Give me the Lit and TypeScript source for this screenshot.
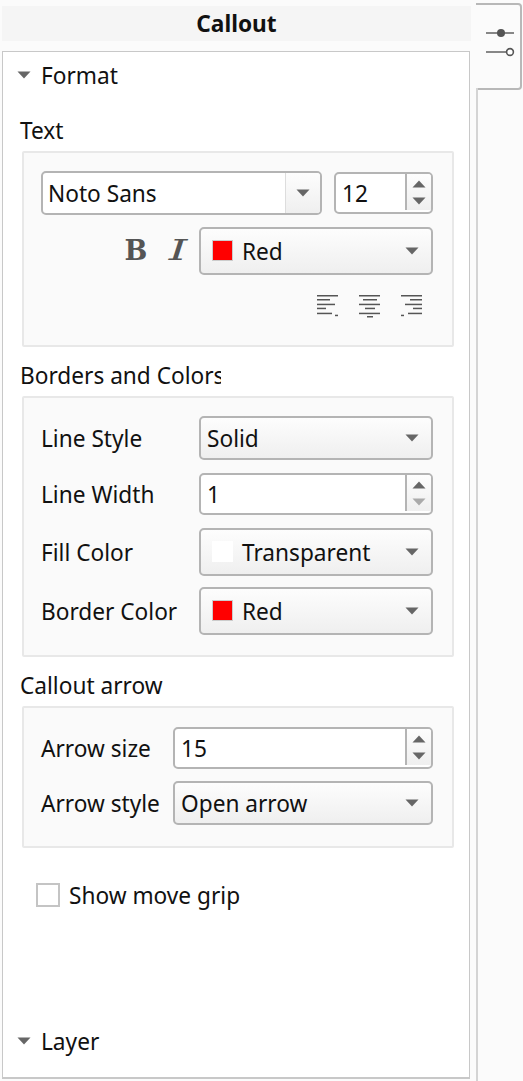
import { LitElement, html, css, svg } from "lit";
import { customElement } from "lit/decorators.js";

const caret = html`<svg class="caret" width="14" height="8" viewBox="0 0 14 8"><path d="M0.5 0.5H13.5L7 7.5Z" fill="#666"/></svg>`;

const combo = (label: unknown, cls = "") =>
  html`<div class="combo ${cls}"><span class="combo-label">${label}</span>${caret}</div>`;

const swatch = (color: string, label: string, cls = "") =>
  combo(html`<span class="swatch ${cls}" style="background:${color}"></span><span>${label}</span>`, "with-swatch");

const spin = (value: string, cls = "", downDisabled = false) => html`
  <div class="spin ${cls}">
    <span class="spin-value">${value}</span>
    <div class="spin-btns">
      <svg width="14" height="8" viewBox="0 0 14 8"><path d="M0.5 7.5H13.5L7 0.5Z" fill="#666"/></svg>
      <svg width="14" height="8" viewBox="0 0 14 8"><path d="M0.5 0.5H13.5L7 7.5Z" fill="${downDisabled ? "#aaa" : "#666"}"/></svg>
    </div>
  </div>`;

const ROW_Y = [1, 5, 9.7, 13.7, 18.7];
const alignIcon = (rows: [number, number][], extra: [number, number, number]) => html`
  <svg class="align" width="22" height="24" viewBox="0 0 22 24">
    ${rows.map(([a, b], i) => svg`<rect x="${a}" y="${ROW_Y[i]}" width="${b - a}" height="1.5" fill="#555"/>`)}
    <rect x="${extra[0]}" y="${extra[2]}" width="${extra[1] - extra[0]}" height="1.5" fill="#555"/>
  </svg>`;

@customElement("app-root")
export class AppRoot extends LitElement {
  static styles = css`
    :host {
      display: flex;
      width: 523px;
      height: 1081px;
      background: #fbfbfb;
      font-family: "Noto Sans", sans-serif;
      font-size: 22.67px;
      color: #111;
      overflow: hidden;
    }
    .main {
      width: 469px;
      margin-left: 2px;
      padding-top: 6px;
      display: flex;
      flex-direction: column;
      flex: none;
    }
    .title {
      height: 35px;
      line-height: 35px;
      background: #f5f5f5;
      text-align: center;
      font-weight: 700;
      margin-bottom: 10px;
    }
    .panel {
      height: 1028px;
      box-sizing: border-box;
      width: 468px;
      border: 1px solid #c8c8c8;
      border-bottom-width: 2px;
      background: #fff;
      display: flex;
      flex-direction: column;
    }
    .section-head {
      height: 48px;
      padding-left: 14px;
      display: flex;
      align-items: center;
      gap: 10px;
      flex: none;
    }
    .section-head span { margin-top: -2px; }
    .section-head svg { margin-top: -3px; }
    .group-label {
      margin: 0 0 5px 17px;
      height: 30px;
      line-height: 30px;
      white-space: nowrap;
    }
    .group-label.clipped { width: 201px; overflow: hidden; }
    .first-label { margin-top: 16px; }
    .group {
      margin-left: 19px;
      width: 432px;
      box-sizing: border-box;
      border: 2px solid #e8e8e8;
      border-radius: 2px;
      background: #fafafa;
      padding: 18px 19px 0 17px;
    }
    .g-text { height: 196px; margin-bottom: 14px; }
    .g-borders { height: 261px; margin-bottom: 14px; }
    .g-arrow { height: 142px; padding-top: 19px; }
    .row { display: flex; align-items: center; }
    .font-row { height: 44px; justify-content: space-between; }
    .style-row { margin-top: 12px; height: 48px; }
    .style-row .b, .style-row .i {
      color: #555;
      width: 42px;
      text-align: center;
      flex: none;
      font-family: "DejaVu Serif", serif;
      font-size: 27px;
      line-height: 48px;
    }
    .style-row .b {
      font-weight: 700;
      margin-left: 74px;
    }
    .style-row .i {
      font-style: italic;
      transform: scaleX(1.75);
    }
    .w233 { width: 234px; flex: none; }
    .aligns {
      margin-top: 19px;
      display: flex;
      justify-content: flex-end;
      gap: 20px;
      padding-right: 10px;
    }
    .combo {
      box-sizing: border-box;
      border: 2px solid #b4b4b4;
      border-radius: 5px;
      background: linear-gradient(#fdfdfd, #efefef);
      display: flex;
      align-items: center;
      justify-content: space-between;
      padding: 0 12px 0 6px;
      flex: none;
    }
    .combo-label { display: flex; align-items: center; }
    .with-swatch { height: 48px; padding-left: 11px; }
    .with-swatch .combo-label { gap: 9px; }
    .swatch {
      width: 21px;
      height: 21px;
      margin-top: -1px;
      box-sizing: border-box;
      border: 1px solid #ccc;
      flex: none;
    }
    .swatch.plain { border-color: #fff; }
    .font-combo {
      width: 281px;
      height: 44px;
      box-sizing: border-box;
      border: 2px solid #b4b4b4;
      border-radius: 5px;
      display: flex;
      overflow: hidden;
      background: #fff;
      flex: none;
    }
    .font-combo .val { flex: 1; padding-left: 5px; line-height: 42px; }
    .font-combo .btn {
      width: 34px;
      border-left: 1px solid #ddd;
      background: linear-gradient(#fdfdfd, #efefef);
      display: flex;
      align-items: center;
      justify-content: center;
    }
    .spin {
      box-sizing: border-box;
      height: 42px;
      border: 2px solid #b4b4b4;
      border-radius: 5px;
      background: #fff;
      display: flex;
      flex: none;
      overflow: hidden;
    }
    .spin-value { flex: 1; padding-left: 6px; line-height: 40px; }
    .spin-btns {
      width: 24px;
      border-left: 2px solid #b4b4b4;
      background: linear-gradient(#fdfdfd, #efefef);
      display: flex;
      flex-direction: column;
      align-items: center;
      justify-content: center;
      gap: 9px;
      margin-bottom: 2px;
    }
    .spin.small { width: 99px; }
    .spin.wide { width: 234px; }
    .spin.wider { width: 260px; }
    .frow { display: flex; align-items: center; }
    .frow > span { flex: none; }
    .frow + .frow { margin-top: 13px; }
    .frow.tight { margin-top: 11px; }
    .form-b .frow > span { width: 158px; }
    .form-a .frow > span { width: 132px; }
    .form-a .frow + .frow { margin-top: 12px; }
    .form-b .combo { width: 234px; }
    .form-a .combo { width: 260px; }
    .combo.plain-h { height: 44px; }
    .combo.plain-h .combo-label { padding-top: 1px; }
    .spacer { flex: 1; }
    .check {
      margin: 34px 0 0 33px;
      display: flex;
      align-items: center;
      gap: 9px;
      height: 26px;
    }
    .box {
      width: 24px;
      height: 24px;
      box-sizing: border-box;
      border: 2px solid #c4c4c4;
      background: #fff;
    }
    .bottom-gap { height: 9px; flex: none; }
    .layer { height: 52px; }
    .side { flex: 1; margin-left: 5px; display: flex; flex-direction: column; }
    .tab {
      margin-top: 3px;
      height: 87px;
      box-sizing: border-box;
      border: 2px solid #b8b8b8;
      border-left: none;
      border-radius: 0 4px 4px 0;
      width: 46px;
      padding: 20px 0 0 10px;
    }
    .rail { flex: 1; width: 0; border-left: 2px solid #d4d4d4; margin-top: -2px; }
  `;

  render() {
    return html`
      <div class="main">
        <div class="title">Callout</div>
        <div class="panel">
          <div class="section-head">${caret}<span>Format</span></div>
          <div class="group-label first-label">Text</div>
          <div class="group g-text">
            <div class="row font-row">
              <div class="font-combo"><span class="val">Noto Sans</span><span class="btn">${caret}</span></div>
              ${spin("12", "small")}
            </div>
            <div class="row style-row">
              <span class="b">B</span><span class="i">I</span>
              <div class="w233">${swatch("#f00", "Red")}</div>
            </div>
            <div class="aligns">
              ${alignIcon([[0, 21], [0, 13], [0, 18], [0, 9], [0, 15]], [18, 21, 20.7])}
              ${alignIcon([[0, 21], [4, 18], [0, 21], [6, 16], [0, 21]], [8, 14, 22])}
              ${alignIcon([[0, 21], [9, 21], [4, 21], [12, 21], [7, 21]], [0, 3, 20.7])}
            </div>
          </div>
          <div class="group-label clipped">Borders and Colors</div>
          <div class="group g-borders">
            <div class="form-b">
              <div class="frow"><span>Line Style</span>${combo("Solid", "plain-h")}</div>
              <div class="frow"><span>Line Width</span>${spin("1", "wide", true)}</div>
              <div class="frow"><span>Fill Color</span>${swatch("#fff", "Transparent", "plain")}</div>
              <div class="frow tight"><span>Border Color</span>${swatch("#f00", "Red")}</div>
            </div>
          </div>
          <div class="group-label">Callout arrow</div>
          <div class="group g-arrow">
            <div class="form-a">
              <div class="frow"><span>Arrow size</span>${spin("15", "wider")}</div>
              <div class="frow"><span>Arrow style</span>${combo("Open arrow", "plain-h")}</div>
            </div>
          </div>
          <div class="check"><span class="box"></span><span>Show move grip</span></div>
          <div class="spacer"></div>
          <div class="section-head layer">${caret}<span>Layer</span></div>
          <div class="bottom-gap"></div>
        </div>
      </div>
      <div class="side">
        <div class="tab">
          <svg width="30" height="32" viewBox="0 0 30 32" fill="none">
            <path d="M0 8H28" stroke="#555" stroke-width="1.4"/>
            <circle cx="15" cy="8" r="4" fill="#555"/>
            <path d="M0 27H21" stroke="#555" stroke-width="1.4"/>
            <circle cx="24" cy="27" r="3.4" fill="#fff" stroke="#555" stroke-width="1.6"/>
          </svg>
        </div>
        <div class="rail"></div>
      </div>
    `;
  }
}
